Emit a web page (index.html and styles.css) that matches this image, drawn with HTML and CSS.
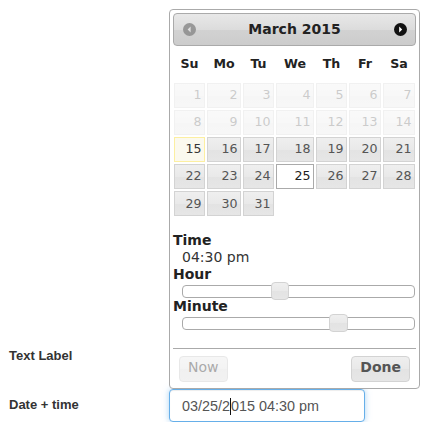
FILE: index.html
```html
<!DOCTYPE html>
<html>
<head>
<meta charset="utf-8">
<link rel="stylesheet" href="styles.css">
</head>
<body>
<form class="form">
  <div class="row">
    <label class="lbl">Text Label</label>
    <div class="field"><div class="control"></div></div>
  </div>
  <div class="row">
    <label class="lbl">Date + time</label>
    <div class="field">
      <div class="control focus">03/25/2<span class="caret"></span>015 04:30 pm</div>
      <div class="dp">
        <div class="dp-header">
          <span class="nav prev"><svg width="13" height="13" viewBox="0 0 13 13"><circle cx="6.5" cy="6.5" r="6.5" fill="#8c8c8c"/><path d="M7.6 3.6 L4.6 6.5 L7.6 9.4 Z" fill="#e0e0e0"/></svg></span>
          <span class="title">March 2015</span>
          <span class="nav next"><svg width="13" height="13" viewBox="0 0 13 13"><circle cx="6.5" cy="6.5" r="6.5" fill="#111"/><path d="M5.2 3.6 L8.2 6.5 L5.2 9.4 Z" fill="#fff"/></svg></span>
        </div>
        <table class="cal">
          <colgroup><col class="c1"><col class="c2"><col class="c3"><col class="c4"><col class="c5"><col class="c6"><col class="c7"></colgroup>
          <thead><tr><th>Su</th><th>Mo</th><th>Tu</th><th>We</th><th>Th</th><th>Fr</th><th>Sa</th></tr></thead>
          <tbody>
            <tr><td><span class="d off">1</span></td><td><span class="d off">2</span></td><td><span class="d off">3</span></td><td><span class="d off">4</span></td><td><span class="d off">5</span></td><td><span class="d off">6</span></td><td><span class="d off">7</span></td></tr>
            <tr><td><span class="d off">8</span></td><td><span class="d off">9</span></td><td><span class="d off">10</span></td><td><span class="d off">11</span></td><td><span class="d off">12</span></td><td><span class="d off">13</span></td><td><span class="d off">14</span></td></tr>
            <tr><td><span class="d today">15</span></td><td><span class="d">16</span></td><td><span class="d">17</span></td><td><span class="d">18</span></td><td><span class="d">19</span></td><td><span class="d">20</span></td><td><span class="d">21</span></td></tr>
            <tr><td><span class="d">22</span></td><td><span class="d">23</span></td><td><span class="d">24</span></td><td><span class="d active">25</span></td><td><span class="d">26</span></td><td><span class="d">27</span></td><td><span class="d">28</span></td></tr>
            <tr><td><span class="d">29</span></td><td><span class="d">30</span></td><td><span class="d">31</span></td><td></td><td></td><td></td><td></td></tr>
          </tbody>
        </table>
        <div class="tp">
          <div class="tp-dt first">Time</div>
          <div class="tp-dd">04:30 pm</div>
          <div class="tp-dt">Hour</div>
          <div class="tp-dd"><div class="slider"><span class="handle" style="left:87.7px"></span></div></div>
          <div class="tp-dt">Minute</div>
          <div class="tp-dd"><div class="slider"><span class="handle" style="left:146px"></span></div></div>
        </div>
        <div class="pane">
          <button type="button" class="btn now">Now</button>
          <button type="button" class="btn done">Done</button>
        </div>
      </div>
    </div>
  </div>
</form>
</body>
</html>
```
FILE: styles.css
```css
html, body {
  margin: 0;
  padding: 0;
  background: #fff;
}
body {
  font-family: "Liberation Sans", Arial, sans-serif;
  font-size: 14px;
  color: #333;
}
.form {
  padding: 340px 0 0 9px;
  display: flex;
  flex-direction: column;
  gap: 16px;
}
.row {
  display: grid;
  grid-template-columns: 160px 196px;
  align-items: start;
}
.lbl {
  font-weight: bold;
  font-size: 13px;
  line-height: 18px;
  padding-top: 7px;
  color: #333;
}
.field {
  position: relative;
}
.control {
  box-sizing: border-box;
  height: 33px;
  border: 1px solid #ccc;
  border-radius: 4px;
  padding: 1px 12px 0;
  font-size: 14.4px;
  line-height: 31px;
  color: #555;
  background: #fff;
}
.control.focus {
  border-color: #66afe9;
  box-shadow: inset 0 1px 1px rgba(0,0,0,.075), 0 0 6px rgba(102,175,233,.55);
}
.caret {
  display: inline-block;
  width: 1px;
  height: 17px;
  background: #111;
  vertical-align: -4px;
}

/* datepicker popup */
.dp {
  position: absolute;
  left: 0;
  bottom: 100%;
  box-sizing: border-box;
  width: 251px;
  padding: 3px;
  border: 1px solid #aaa;
  border-radius: 4px;
  background: #fff;
  color: #222;
  font-family: "DejaVu Sans", Verdana, sans-serif;
  font-size: 14px;
  line-height: 1.42857;
}
.dp-header {
  position: relative;
  box-sizing: border-box;
  height: 33px;
  border: 1px solid #aaa;
  border-radius: 4px;
  background: linear-gradient(to bottom, #e8e8e8 0%, #dcdcdc 50%, #d2d2d2 51%, #cccccc 100%);
  text-align: center;
}
.title {
  display: block;
  font-weight: bold;
  line-height: 31px;
  color: #222;
}
.nav {
  position: absolute;
  top: 8.5px;
  width: 13px;
  height: 13px;
}
.nav svg { display: block; }
.prev { left: 8.5px; opacity: .85; }
.next { right: 8.5px; }

.cal {
  width: 243px;
  table-layout: fixed;
  border-collapse: collapse;
  font-size: 12.6px;
  margin: 0 0 5.6px;
}
.c1 { width: 33px; }
.c2 { width: 36px; }
.c3 { width: 33px; }
.c4 { width: 40px; }
.c5 { width: 33px; }
.c6 { width: 34px; }
.c7 { width: 34px; }
.cal th {
  padding: 8.8px 0;
  line-height: 18px;
  font-weight: bold;
  text-align: center;
  color: #222;
}
.cal td {
  padding: 1px;
  border: 0;
}
.d {
  display: block;
  border: 1px solid #d3d3d3;
  padding: 2.52px;
  line-height: 18px;
  text-align: right;
  color: #555;
  background: linear-gradient(to bottom, #efefef 0%, #e9e9e9 50%, #e3e3e3 51%, #e6e6e6 100%);
}
.d.off { opacity: .3; }
.d.today {
  border-color: #fcefa1;
  background: #fbf9ee;
  color: #363636;
}
.d.active {
  border-color: #aaa;
  background: #fff;
  color: #212121;
}

.tp { padding-top: 9px; }
.tp-dt {
  font-weight: bold;
  line-height: 17px;
  color: #222;
}
.tp-dd {
  padding-left: 9px;
  line-height: 17px;
  color: #333;
}
.slider {
  position: relative;
  box-sizing: border-box;
  height: 13px;
  margin: 2.5px 1px 0 0;
  border: 1px solid #aaa;
  border-radius: 4px;
  background: #fff;
}
.tp-dd + .tp-dt + .tp-dd .slider { margin-top: 2px; }
.handle {
  position: absolute;
  top: -4px;
  box-sizing: border-box;
  width: 18.8px;
  height: 18.8px;
  border: 1px solid #d3d3d3;
  border-radius: 4px;
  background: linear-gradient(to bottom, #efefef 0%, #e9e9e9 50%, #e3e3e3 51%, #e6e6e6 100%);
}

.pane {
  margin-top: 18px;
  border-top: 1px solid #aaa;
  padding: 0 2.8px;
  display: flex;
  justify-content: space-between;
}
.btn {
  margin: 7px 2.8px 2.8px;
  padding: 2.8px 8.4px 4.2px;
  border: 1px solid #d3d3d3;
  border-radius: 4px;
  background: linear-gradient(to bottom, #efefef 0%, #e9e9e9 50%, #e3e3e3 51%, #e6e6e6 100%);
  color: #555;
  font-family: "DejaVu Sans", Verdana, sans-serif;
  font-size: 14px;
  line-height: 17.6px;
}
.btn.now { opacity: .5; font-weight: normal; }
.btn.done { font-weight: bold; }
```
